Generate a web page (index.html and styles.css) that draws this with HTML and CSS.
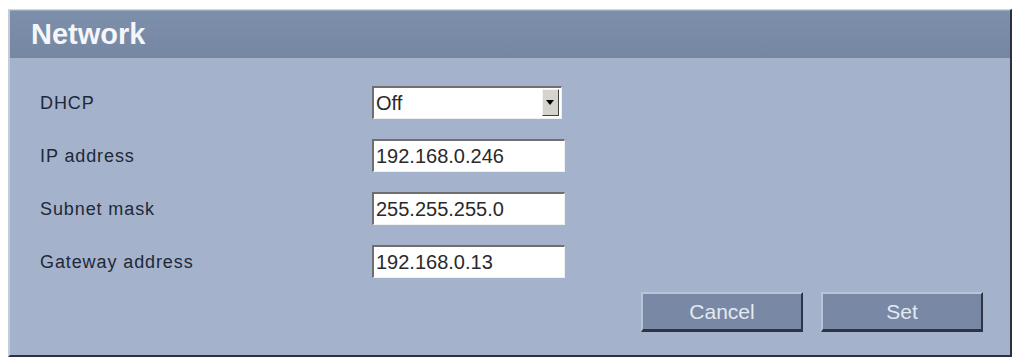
FILE: index.html
```html
<!DOCTYPE html>
<html lang="en">
<head>
    <meta charset="UTF-8">
    <title>Network</title>
    <link rel="stylesheet" href="styles.css">
</head>
<body>
    <div class="panel">
        <div class="panel-header">Network</div>
        <div class="panel-body">
            <div class="form">
                <label class="label" for="dhcp">DHCP</label>
                <div class="select-wrap">
                    <select class="select" id="dhcp">
                        <option>Off</option>
                        <option>On</option>
                    </select>
                    <span class="select-arrow"></span>
                </div>

                <label class="label" for="ip">IP address</label>
                <input class="field" id="ip" type="text" value="192.168.0.246">

                <label class="label" for="mask">Subnet mask</label>
                <input class="field" id="mask" type="text" value="255.255.255.0">

                <label class="label" for="gw">Gateway address</label>
                <input class="field" id="gw" type="text" value="192.168.0.13">
            </div>
            <div class="actions">
                <button class="btn">Cancel</button>
                <button class="btn">Set</button>
            </div>
        </div>
    </div>
</body>
</html>
```

FILE: styles.css
```css
body {
    margin: 0;
    background-color: #ffffff;
    font-family: "Liberation Sans", Arial, sans-serif;
}
.panel {
    width: 1004px;
    height: 348px;
    margin: 9px 0 0 8px;
    box-sizing: border-box;
    border-top: 1px solid #d3d8e0;
    border-left: 2px solid #c4ccd8;
    border-right: 2px solid #2c313d;
    border-bottom: 2px solid #2c313d;
    background-color: #a4b3cb;
    display: flex;
    flex-direction: column;
}
.panel-header {
    height: 48px;
    background: linear-gradient(#7c8fab, #7787a3);
    color: #f4f6fa;
    font-size: 29px;
    font-weight: bold;
    line-height: 46px;
    padding-left: 21px;
    border-top: 1px solid #98a8c0;
    box-sizing: border-box;
}
.panel-body {
    flex: 1;
    padding: 28px 27px 0 30px;
}
.form {
    display: grid;
    grid-template-columns: 332px 193px;
    grid-auto-rows: 33px;
    row-gap: 20px;
    align-items: center;
}
.label {
    font-size: 18px;
    letter-spacing: 0.9px;
    color: #1f2838;
    padding-top: 2px;
}
.field,
.select {
    height: 33px;
    box-sizing: border-box;
    margin: 0;
    background-color: #ffffff;
    border-top: 2px solid #6f6f6f;
    border-left: 2px solid #6f6f6f;
    border-right: 1px solid #eef0f2;
    border-bottom: 1px solid #eef0f2;
    font-family: "Liberation Sans", Arial, sans-serif;
    font-size: 20px;
    color: #2a2a2a;
    padding: 0 0 0 2px;
    outline: none;
}
.field {
    width: 193px;
}
.select-wrap {
    position: relative;
    width: 190px;
    height: 33px;
}
.select {
    width: 190px;
    appearance: none;
    -webkit-appearance: none;
    border-radius: 0;
}
.select-arrow {
    position: absolute;
    right: 3px;
    top: 3px;
    width: 15px;
    height: 25px;
    background-color: #d6d3cc;
    border-top: 1px solid #f4f3ef;
    border-left: 1px solid #f4f3ef;
    border-right: 1px solid #404040;
    border-bottom: 1px solid #404040;
    pointer-events: none;
}
.select-arrow::after {
    content: "";
    position: absolute;
    left: 3px;
    top: 10px;
    border-left: 4px solid transparent;
    border-right: 4px solid transparent;
    border-top: 5px solid #000000;
}
.actions {
    display: flex;
    justify-content: flex-end;
    gap: 18px;
    margin-top: 14px;
}
.btn {
    width: 162px;
    height: 40px;
    box-sizing: border-box;
    background-color: #7888a5;
    color: #e4e9f1;
    font-family: "Liberation Sans", Arial, sans-serif;
    font-size: 21px;
    border-top: 2px solid #b8c4d8;
    border-left: 2px solid #b8c4d8;
    border-right: 2px solid #2c3446;
    border-bottom: 3px solid #2c3446;
    padding: 0;
    cursor: pointer;
}
```
